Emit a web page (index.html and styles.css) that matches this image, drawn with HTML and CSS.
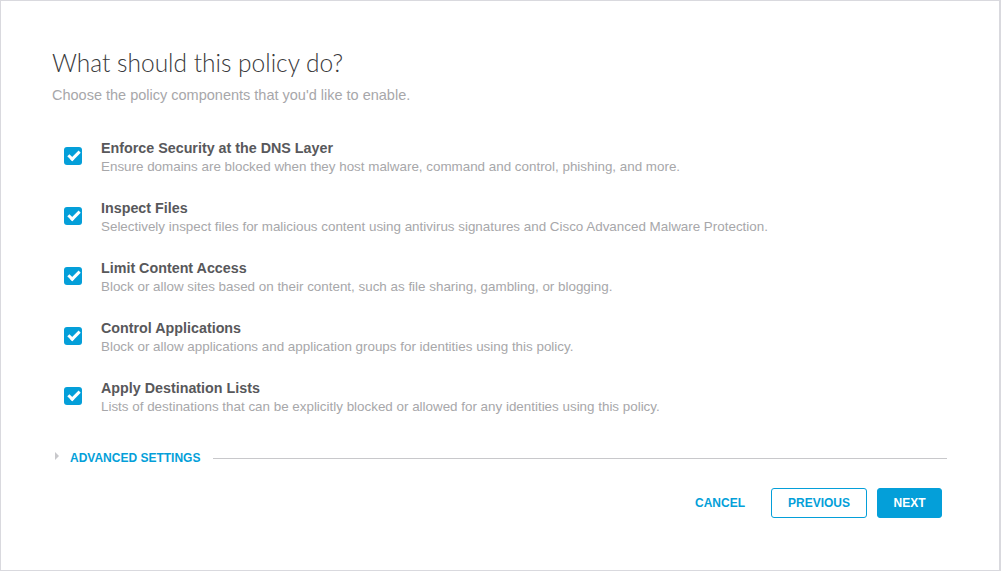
FILE: index.html
```html
<!DOCTYPE html>
<html lang="en">
<head>
    <meta charset="UTF-8">
    <title>Policy Wizard</title>
    <link rel="stylesheet" href="styles.css">
</head>
<body>

<div class="wizard">
    <h2>What should this policy do?</h2>
    <p class="subtitle">Choose the policy components that you'd like to enable.</p>

    <div class="components">
        <label class="component">
            <input type="checkbox" checked>
            <span class="check"></span>
            <span class="text">
                <span class="name">Enforce Security at the DNS Layer</span>
                <span class="desc">Ensure domains are blocked when they host malware, command and control, phishing, and more.</span>
            </span>
        </label>
        <label class="component">
            <input type="checkbox" checked>
            <span class="check"></span>
            <span class="text">
                <span class="name">Inspect Files</span>
                <span class="desc">Selectively inspect files for malicious content using antivirus signatures and Cisco Advanced Malware Protection.</span>
            </span>
        </label>
        <label class="component">
            <input type="checkbox" checked>
            <span class="check"></span>
            <span class="text">
                <span class="name">Limit Content Access</span>
                <span class="desc">Block or allow sites based on their content, such as file sharing, gambling, or blogging.</span>
            </span>
        </label>
        <label class="component">
            <input type="checkbox" checked>
            <span class="check"></span>
            <span class="text">
                <span class="name">Control Applications</span>
                <span class="desc">Block or allow applications and application groups for identities using this policy.</span>
            </span>
        </label>
        <label class="component">
            <input type="checkbox" checked>
            <span class="check"></span>
            <span class="text">
                <span class="name">Apply Destination Lists</span>
                <span class="desc">Lists of destinations that can be explicitly blocked or allowed for any identities using this policy.</span>
            </span>
        </label>
    </div>

    <div class="advanced">
        <span class="caret"></span>
        <span class="advanced-label">ADVANCED SETTINGS</span>
        <span class="rule"></span>
    </div>

    <div class="actions">
        <button class="btn-link">CANCEL</button>
        <button class="btn-outline">PREVIOUS</button>
        <button class="btn-primary">NEXT</button>
    </div>
</div>

</body>
</html>
```

FILE: styles.css
```css
html, body {
    height: 100%;
}
body {
    margin: 0;
    font-family: "Liberation Sans", Arial, sans-serif;
    background-color: #fff;
    border: 1px solid #d9d9de;
    border-right-width: 2px;
    box-sizing: border-box;
}
.wizard {
    padding: 47px 0 0 51px;
    width: 895px;
}
h2 {
    margin: 0;
    font-family: Lato, "Liberation Sans", sans-serif;
    font-weight: 300;
    font-size: 24.5px;
    line-height: 30px;
    color: #39393b;
}
.subtitle {
    margin: 9px 0 0;
    font-size: 14.5px;
    color: #a7a7aa;
}
.components {
    margin-top: 36px;
}
.component {
    display: flex;
    align-items: flex-start;
    height: 60px;
    cursor: pointer;
}
.component input {
    display: none;
}
.check {
    width: 18px;
    height: 18px;
    margin: 8px 19px 0 12px;
    border-radius: 3px;
    background-color: #049fd9;
    position: relative;
    flex-shrink: 0;
}
.check::after {
    content: "";
    position: absolute;
    left: 4px;
    top: 4px;
    width: 9px;
    height: 4px;
    border-left: 3px solid #fff;
    border-bottom: 3px solid #fff;
    transform: rotate(-45deg);
}
.text {
    display: flex;
    flex-direction: column;
}
.name {
    font-size: 14.3px;
    font-weight: bold;
    color: #58585b;
    line-height: 18px;
}
.desc {
    font-size: 13.4px;
    color: #a7a7aa;
    line-height: 18px;
    margin-top: 1px;
}
.advanced {
    display: flex;
    align-items: center;
    margin-top: 11px;
    height: 16px;
}
.caret {
    width: 0;
    height: 0;
    border-left: 4px solid #c8c8cb;
    border-top: 4px solid transparent;
    border-bottom: 4px solid transparent;
    margin: 0 11px 0 3px;
    position: relative;
    top: -2px;
}
.advanced-label {
    font-size: 12px;
    font-weight: bold;
    color: #049fd9;
}
.rule {
    flex: 1;
    height: 1px;
    background-color: #c8c8cb;
    margin-left: 13px;
}
.actions {
    display: flex;
    justify-content: flex-end;
    align-items: center;
    margin-top: 22px;
    padding-right: 5px;
}
button {
    font-family: "Liberation Sans", Arial, sans-serif;
    font-size: 12px;
    font-weight: bold;
    height: 30px;
    border-radius: 3px;
    cursor: pointer;
}
.btn-link {
    background: none;
    border: none;
    color: #049fd9;
    margin-right: 20px;
    padding: 0 6px;
}
.btn-outline {
    background: #fff;
    border: 1px solid #049fd9;
    color: #049fd9;
    width: 96px;
    margin-right: 10px;
}
.btn-primary {
    background: #049fd9;
    border: 1px solid #049fd9;
    color: #fff;
    width: 65px;
}
```
